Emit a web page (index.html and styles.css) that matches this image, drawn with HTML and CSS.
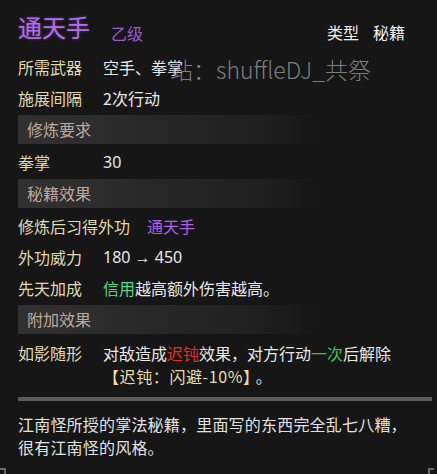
FILE: index.html
```html
<!DOCTYPE html>
<html lang="zh-CN">
<head>
    <meta charset="UTF-8">
    <meta name="viewport" content="width=device-width, initial-scale=1.0">
    <title>通天手 - 秘籍</title>
    <link rel="stylesheet" href="styles.css">
</head>
<body>
    <div class="tooltip">
        <div class="title-row">
            <span class="item-name">通天手</span>
            <span class="item-grade">乙级</span>
            <span class="item-type">类型<span class="type-value">秘籍</span></span>
        </div>

        <div class="row">
            <span class="label">所需武器</span>
            <span class="value">空手、拳掌</span>
        </div>
        <div class="row">
            <span class="label">施展间隔</span>
            <span class="value">2次行动</span>
        </div>

        <div class="section">修炼要求</div>
        <div class="row">
            <span class="label">拳掌</span>
            <span class="value num">30</span>
        </div>

        <div class="section">秘籍效果</div>
        <div class="row">
            <span class="label">修炼后习得外功</span>
            <span class="value purple">通天手</span>
        </div>
        <div class="row">
            <span class="label">外功威力</span>
            <span class="value num">180 → 450</span>
        </div>
        <div class="row">
            <span class="label">先天加成</span>
            <span class="value"><span class="green">信用</span>越高额外伤害越高。</span>
        </div>

        <div class="section">附加效果</div>
        <div class="row multi">
            <span class="label">如影随形</span>
            <span class="value">对敌造成<span class="red">迟钝</span>效果，对方行动<span class="green-dark">一次</span>后解除<br><span class="note">【迟钝：闪避-10%】</span><span class="stop">。</span></span>
        </div>

        <div class="divider"></div>

        <p class="desc">江南怪所授的掌法秘籍，里面写的东西完全乱七八糟，<br>很有江南怪的风格。</p>

        <!-- 水印 -->
        <span class="watermark">站：shuffleDJ_共祭</span>
        <span class="corner corner-left"></span>
        <span class="corner corner-right"></span>
    </div>
</body>
</html>
```

FILE: styles.css
```css
* {
    margin: 0;
    padding: 0;
    box-sizing: border-box;
}

body {
    background: #161616;
    font-family: "Noto Sans CJK SC", "Noto Sans", sans-serif;
    color: #e4e4e4;
    font-size: 16px;
}

.tooltip {
    position: relative;
    width: 437px;
    height: 474px;
    padding: 0 5px 0 18px;
    background: #161616;
    overflow: hidden;
}

/* 标题行 */
.title-row {
    display: flex;
    align-items: flex-start;
    height: 52px;
}

.item-name {
    margin-top: 13px;
    font-size: 24px;
    line-height: 28px;
    color: #b46ee6;
    text-shadow: 0 0 3px rgba(150, 80, 210, 0.6);
}

.item-grade {
    margin: 24px 0 0 21px;
    font-size: 16px;
    line-height: 18px;
    color: #9d5ccc;
}

.item-type {
    margin: 23px 27px 0 auto;
    line-height: 18px;
    color: #f0f0f0;
}

.type-value {
    margin-left: 14px;
}

/* 属性行 */
.row {
    display: flex;
    gap: 17px;
    height: 31px;
    line-height: 31px;
}

.label {
    min-width: 68px;
    color: #e2d9b0;
    white-space: nowrap;
}

.value {
    color: #e8e8e8;
    white-space: nowrap;
}

.num {
    font-family: "Noto Sans", sans-serif;
}

.row.multi {
    height: auto;
    line-height: 23px;
    padding-top: 5px;
}

.purple {
    color: #b060e8;
}

.green {
    color: #4fd98a;
}

.green-dark {
    color: #3fbf5a;
}

.red {
    color: #e22c2c;
}

.note {
    color: #e6deaa;
    letter-spacing: 0.6px;
}

.stop {
    margin-left: 4px;
}

/* 分组标题条 */
.section {
    width: 400px;
    height: 29px;
    margin: 1px 0 3px;
    padding-left: 9px;
    line-height: 29px;
    color: #bea89c;
    background: linear-gradient(to right, #313131 0, #2d2d2d 80px, #262626 150px, #202020 240px, rgba(22, 22, 22, 0) 300px);
}

.divider {
    width: 414px;
    height: 4px;
    margin-top: 9px;
    background: #5b5b5b;
}

.desc {
    margin-top: 12px;
    line-height: 23px;
    color: #e2e2e2;
    letter-spacing: 0.2px;
}

.watermark {
    position: absolute;
    left: 170px;
    top: 53px;
    font-size: 23px;
    font-weight: 300;
    line-height: 32px;
    color: rgba(145, 145, 145, 0.85);
}

.corner {
    position: absolute;
    bottom: 0;
    width: 6px;
    height: 6px;
    border-top: 2px solid #6a6a6a;
}

.corner-left {
    left: 0;
    border-right: 2px solid #6a6a6a;
}

.corner-right {
    right: 3px;
    border-left: 2px solid #6a6a6a;
}
```
